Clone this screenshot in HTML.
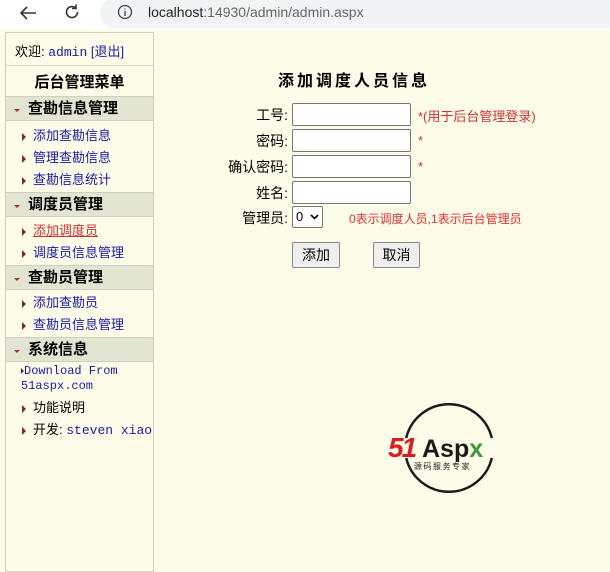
<!DOCTYPE html>
<html><head><meta charset="utf-8"><style>
*{box-sizing:border-box;margin:0;padding:0}
body{width:610px;height:562px;overflow:hidden;background:#fcfce8;font-family:"Liberation Sans","Noto Sans CJK SC",sans-serif;font-size:13px;color:#000;position:relative}
.chrome{position:absolute;left:0;top:0;width:610px;height:30px;background:#fff}
.url{position:absolute;left:100px;top:-2px;width:520px;height:30px;background:#f1f3f4;border-radius:15px}
.side{position:absolute;left:5px;top:32px;width:149px;height:540px;border:1px solid #cfd0bd;background:#fcfce8}
.a{position:absolute;white-space:nowrap}
.hd{position:absolute;left:0;width:147px;height:25px;background:#e3e5d3;border-top:1px solid #cfd1bd;border-bottom:1px solid #cfd1bd;font-weight:bold;font-size:15px;padding-left:22px;line-height:23px}
.hd:before{content:"";position:absolute;left:8px;top:12px;border-left:3px solid transparent;border-right:3px solid transparent;border-top:3px solid #a33}
.it{position:absolute;left:16px;color:#1a1aa6;white-space:nowrap}
.it:before{content:"";display:inline-block;border-top:4px solid transparent;border-bottom:4px solid transparent;border-left:4px solid #7a2a2a;margin-right:7px;vertical-align:-1px}
.mono{font-family:"Liberation Mono","Noto Sans CJK SC",monospace}
.lbl{position:absolute;right:322px;font-size:14px;white-space:nowrap}
.in{position:absolute;left:292px;width:119px;height:23px;border:1px solid #777;border-radius:2px;background:#fff}
.star{position:absolute;left:418px;color:#c33;font-size:13px}
.btn{position:absolute;top:242px;height:26px;border:1px solid #888;border-radius:2px;background:#efefef;font-size:14px;text-align:center;line-height:24px}
</style></head><body>
<div class="chrome">
<svg class="a" style="left:18px;top:5px" width="20" height="16" viewBox="0 0 20 16"><path d="M18 8H3M9 2L3 8l6 6" stroke="#333" stroke-width="1.6" fill="none"/></svg>
<svg class="a" style="left:63px;top:3px" width="18" height="18" viewBox="0 0 18 18"><path d="M14.5 9A5.5 5.5 0 1 1 12.5 4.8M13 1.5v4h-4" stroke="#333" stroke-width="1.6" fill="none"/></svg>
<div class="url"></div>
<svg class="a" style="left:117px;top:4px" width="16" height="16"><circle cx="8" cy="8" r="6.5" stroke="#444" stroke-width="1.3" fill="none"/><path d="M8 7v5M8 4.5v1" stroke="#444" stroke-width="1.4"/></svg>
<div class="a" style="left:148px;top:4px;font-size:14px;color:#222">localhost<span style="color:#666">:14930/admin/admin.aspx</span></div>
</div>
<div class="side">
<div class="a" style="left:9px;top:8px">欢迎: <span class="mono" style="color:#1a1aa6">admin</span> <span style="color:#1a1aa6">[退出]</span></div>
<div class="a" style="left:0;top:32px;width:147px;border-top:1px solid #d6d8c4"></div>
<div class="a" style="left:0;top:38px;width:147px;text-align:center;font-weight:bold;font-size:15px">后台管理菜单</div>
<div class="hd" style="top:63px">查勘信息管理</div>
<div class="it" style="top:92px">添加查勘信息</div>
<div class="it" style="top:114px">管理查勘信息</div>
<div class="it" style="top:136px">查勘信息统计</div>
<div class="hd" style="top:159px">调度员管理</div>
<div class="it" style="top:187px;color:#c33;text-decoration:underline">添加调度员</div>
<div class="it" style="top:209px">调度员信息管理</div>
<div class="hd" style="top:232px">查勘员管理</div>
<div class="it" style="top:259px">添加查勘员</div>
<div class="it" style="top:281px">查勘员信息管理</div>
<div class="hd" style="top:304px">系统信息</div>
<div class="a mono" style="left:15px;top:331px;color:#1a1aa6;font-size:12px;line-height:15px"><span style="border-top:3px solid transparent;border-bottom:3px solid transparent;border-left:3px solid #7a2a2a;display:inline-block"></span>Download From<br>51aspx.com</div>
<div class="it" style="top:364px;color:#000">功能说明</div>
<div class="it" style="top:386px;color:#000">开发: <span class="mono" style="color:#1a1aa6">steven xiao</span></div>
</div>
<div class="a" style="left:278px;top:67px;font-size:16px;font-weight:bold;letter-spacing:3px">添加调度人员信息</div>
<div class="lbl" style="top:105px">工号:</div><div class="in" style="top:103px"></div><div class="star" style="top:106px">*(用于后台管理登录)</div>
<div class="lbl" style="top:131px">密码:</div><div class="in" style="top:129px"></div><div class="star" style="top:133px">*</div>
<div class="lbl" style="top:157px">确认密码:</div><div class="in" style="top:155px"></div><div class="star" style="top:159px">*</div>
<div class="lbl" style="top:183px">姓名:</div><div class="in" style="top:181px"></div>
<div class="lbl" style="top:208px">管理员:</div>
<div class="a" style="left:292px;top:206px;width:31px;height:22px;border:1px solid #777;border-radius:2px;background:#fff;font-size:13px;padding-left:3px;line-height:20px">0<svg style="position:absolute;left:17px;top:7px" width="9" height="6"><path d="M1 1l3.5 3.5L8 1" stroke="#000" stroke-width="1.6" fill="none"/></svg></div>
<div class="a" style="left:349px;top:210px;color:#d33;font-size:12px">0表示调度人员,1表示后台管理员</div>
<div class="btn" style="left:292px;width:48px">添加</div>
<div class="btn" style="left:373px;width:47px">取消</div>
<svg class="a" style="left:380px;top:398px" width="140" height="100" viewBox="0 0 140 100">
<path d="M26.2 40A44 44 0 0 1 111.8 40" stroke="#1a1a1a" stroke-width="2.5" fill="none"/>
<path d="M111.8 60A44 44 0 0 1 26.2 60" stroke="#1a1a1a" stroke-width="2.5" fill="none"/>
<text x="8" y="59" font-family="Liberation Sans" font-weight="bold" font-style="italic" font-size="28" fill="#d81e1e" letter-spacing="-2">51</text>
<text x="42" y="59" font-family="Liberation Sans" font-weight="bold" font-size="25" fill="#1a1a1a">Asp<tspan fill="#3a9a3a">x</tspan></text>
<text x="34" y="71" font-family="Noto Sans CJK SC" font-size="8" fill="#1a1a1a" letter-spacing="1.5">源码服务专家</text>
</svg>
</body></html>
